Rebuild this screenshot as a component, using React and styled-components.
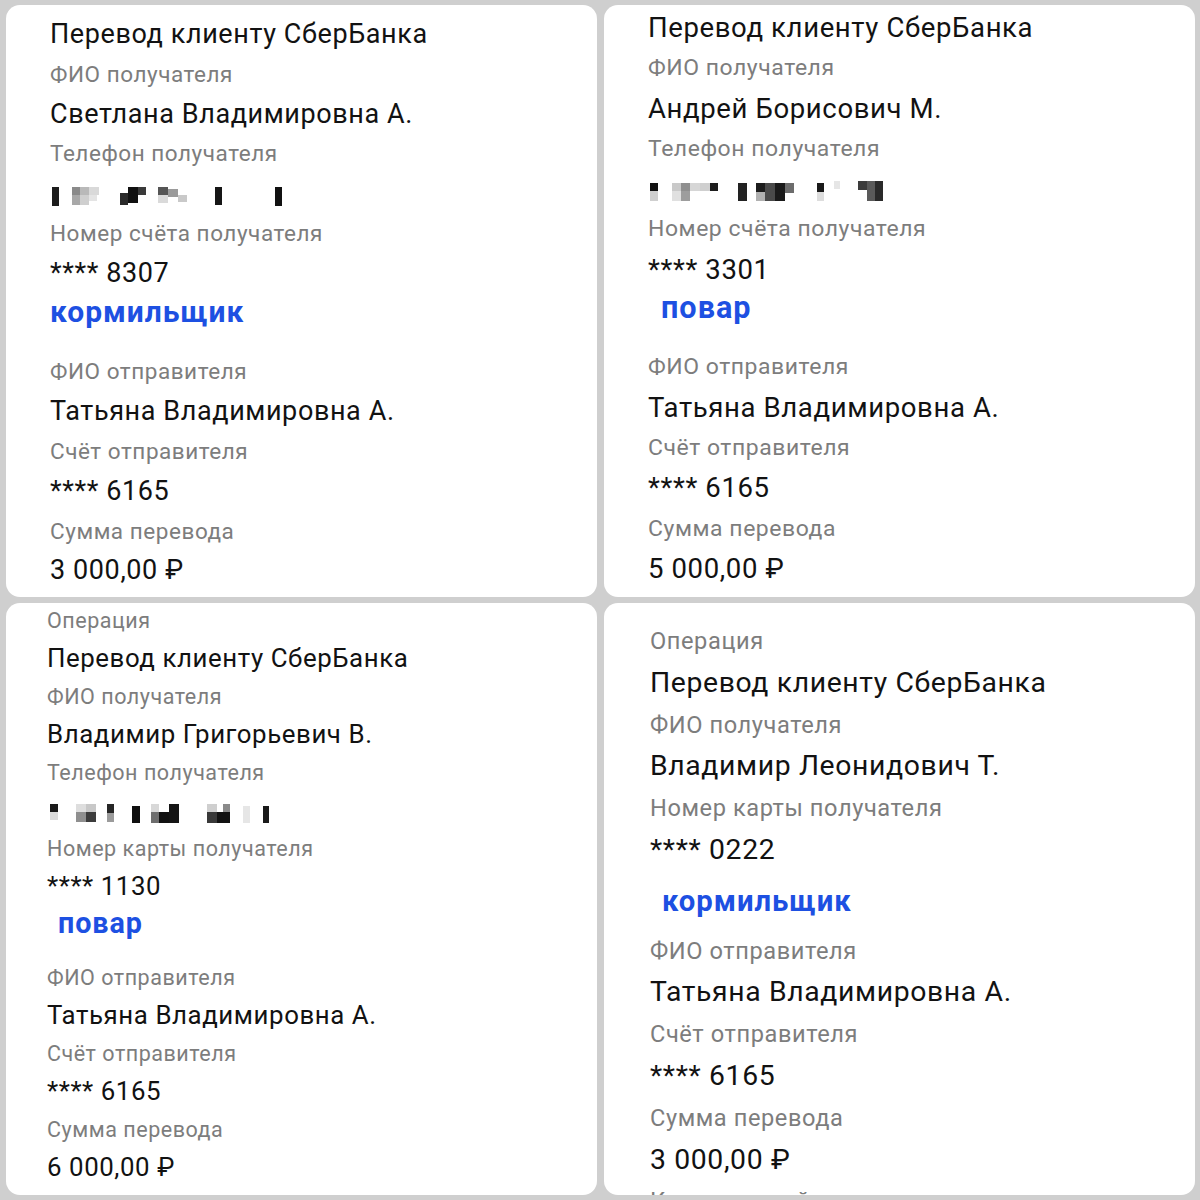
import React from 'react';
import styled, {createGlobalStyle} from 'styled-components';

const GlobalStyle = createGlobalStyle`
    html, body {
        margin: 0;
        padding: 0;
        background: #cfcfcf;
    }
    body {
        font-family: Roboto, "Liberation Sans", Arial, sans-serif;
    }
`

const Collage = styled.div`
    width: 1200px;
    height: 1200px;
    box-sizing: border-box;
    padding: 5px 5px 5px 6px;
    display: grid;
    grid-template-columns: 1fr 1fr;
    grid-template-rows: 1fr 1fr;
    column-gap: 7px;
    row-gap: 6px;
    background: #cfcfcf;
`

const Panel = styled.div`
    background: #ffffff;
    border-radius: 14px;
    overflow: hidden;
    display: flex;
    flex-direction: column;
    padding-left: ${p => p.$left}px;
    padding-top: ${p => Math.max(p.$top, 0)}px;
`

const Rows = styled.div`
    display: flex;
    flex-direction: column;
    margin-top: ${p => Math.min(p.$top, 0)}px;
`

const Label = styled.div`
    height: ${p => p.$line}px;
    line-height: ${p => p.$line + 3}px;
    font-size: ${p => 22.5 * p.$scale}px;
    letter-spacing: ${p => 0.55 * p.$scale}px;
    color: #7d7d7d;
    white-space: nowrap;
`

const Value = styled.div`
    height: ${p => p.$line}px;
    line-height: ${p => p.$line + 3}px;
    font-size: ${p => 27 * p.$scale}px;
    letter-spacing: ${p => 0.6 * p.$scale}px;
    color: #121212;
    white-space: nowrap;
`

const Tag = styled.div`
    height: ${p => p.$line}px;
    line-height: ${p => p.$line}px;
    font-size: ${p => 30 * p.$scale}px;
    font-weight: 700;
    letter-spacing: ${p => 1 * p.$scale}px;
    color: #1d50e2;
    padding-left: ${p => p.$indent}px;
    margin-top: ${p => p.$before}px;
    margin-bottom: ${p => p.$after}px;
    white-space: nowrap;
`

const MaskRow = styled.div`
    height: ${p => p.$line}px;
    display: flex;
    align-items: center;
    padding-top: 7px;
    box-sizing: border-box;
`

function Mosaic({cells, width}) {
    return (
        <svg width={width} height={24} viewBox={`0 0 ${width} 24`}>
            {cells.map(([x, y, w, h, c], i) => (
                <rect key={i} x={x} y={y} width={w} height={h} fill={c} />
            ))}
        </svg>
    );
}

const mosaicA = [
    [2, 3, 7, 19, '#1c1c1c'],
    [22, 3, 8, 8, '#8a8a8a'], [30, 3, 9, 8, '#b9b9b9'], [39, 3, 10, 8, '#d9d9d9'],
    [22, 11, 8, 10, '#a8a8a8'], [30, 11, 9, 10, '#cfcfcf'], [39, 11, 8, 6, '#e4e4e4'],
    [70, 9, 8, 12, '#2a2a2a'], [78, 3, 10, 16, '#111111'], [88, 3, 8, 8, '#3a3a3a'],
    [108, 3, 10, 8, '#555555'], [118, 5, 10, 8, '#9a9a9a'], [128, 11, 9, 7, '#c9c9c9'], [108, 11, 10, 8, '#dadada'],
    [165, 3, 7, 18, '#161616'],
    [225, 3, 7, 19, '#111111']
];

const mosaicB = [
    [2, 4, 8, 8, '#111111'], [2, 12, 8, 10, '#cfcfcf'],
    [24, 4, 9, 8, '#c9c9c9'], [33, 4, 9, 8, '#8f8f8f'], [42, 4, 10, 8, '#d6d6d6'], [24, 12, 9, 10, '#e0e0e0'], [33, 12, 9, 10, '#9d9d9d'],
    [62, 4, 8, 8, '#1d1d1d'], [52, 4, 10, 8, '#cfcfcf'],
    [90, 4, 9, 18, '#222222'],
    [108, 4, 9, 9, '#1c1c1c'], [117, 4, 10, 18, '#4a4a4a'], [127, 4, 10, 18, '#1a1a1a'], [137, 4, 9, 10, '#6c6c6c'], [108, 13, 9, 9, '#b0b0b0'],
    [169, 4, 7, 9, '#1a1a1a'], [169, 13, 7, 9, '#dddddd'],
    [186, 2, 6, 8, '#e6e6e6'],
    [210, 2, 9, 9, '#3c3c3c'], [219, 2, 8, 20, '#5a5a5a'], [227, 2, 8, 20, '#2a2a2a']
];

const mosaicC = [
    [3, 3, 8, 8, '#1a1a1a'], [3, 11, 8, 8, '#dcdcdc'],
    [29, 3, 10, 8, '#dedede'], [29, 11, 10, 10, '#8f8f8f'], [39, 3, 10, 8, '#c8c8c8'], [39, 11, 10, 10, '#3c3c3c'],
    [60, 3, 7, 9, '#262626'], [60, 12, 7, 9, '#9b9b9b'],
    [85, 5, 8, 17, '#0f0f0f'],
    [104, 3, 8, 8, '#d8d8d8'], [112, 11, 10, 11, '#121212'], [122, 3, 10, 19, '#151515'], [104, 11, 8, 11, '#6e6e6e'],
    [160, 3, 10, 8, '#cfcfcf'], [160, 11, 10, 11, '#393939'], [170, 11, 13, 11, '#121212'], [176, 3, 7, 8, '#8a8a8a'],
    [196, 5, 7, 17, '#e6e6e6'],
    [216, 5, 6, 17, '#1a1a1a']
];

const panels = [
    {
        key: 'tl', left: 44, top: 8, line: 39.8, scale: 1,
        rows: [
            ['v', 'Перевод клиенту СберБанка'],
            ['l', 'ФИО получателя'],
            ['v', 'Светлана Владимировна А.'],
            ['l', 'Телефон получателя'],
            ['m', mosaicA, 240],
            ['l', 'Номер счёта получателя'],
            ['v', '**** 8307'],
            ['t', 'кормильщик', 0, 0, 19, 1],
            ['l', 'ФИО отправителя'],
            ['v', 'Татьяна Владимировна А.'],
            ['l', 'Счёт отправителя'],
            ['v', '**** 6165'],
            ['l', 'Сумма перевода'],
            ['v', '3 000,00 ₽']
        ]
    },
    {
        key: 'tr', left: 44, top: 1, line: 40.3, scale: 1.02,
        rows: [
            ['v', 'Перевод клиенту СберБанка'],
            ['l', 'ФИО получателя'],
            ['v', 'Андрей Борисович М.'],
            ['l', 'Телефон получателя'],
            ['m', mosaicB, 240],
            ['l', 'Номер счёта получателя'],
            ['v', '**** 3301'],
            ['t', 'повар', 13, 0, 17, 1.02],
            ['l', 'ФИО отправителя'],
            ['v', 'Татьяна Владимировна А.'],
            ['l', 'Счёт отправителя'],
            ['v', '**** 6165'],
            ['l', 'Сумма перевода'],
            ['v', '5 000,00 ₽']
        ]
    },
    {
        key: 'bl', left: 41, top: -3, line: 38, scale: 0.957,
        rows: [
            ['l', 'Операция'],
            ['v', 'Перевод клиенту СберБанка'],
            ['l', 'ФИО получателя'],
            ['v', 'Владимир Григорьевич В.'],
            ['l', 'Телефон получателя'],
            ['m', mosaicC, 230],
            ['l', 'Номер карты получателя'],
            ['v', '**** 1130'],
            ['t', 'повар', 11, 0, 15, 0.957],
            ['l', 'ФИО отправителя'],
            ['v', 'Татьяна Владимировна А.'],
            ['l', 'Счёт отправителя'],
            ['v', '**** 6165'],
            ['l', 'Сумма перевода'],
            ['v', '6 000,00 ₽']
        ]
    },
    {
        key: 'br', left: 46, top: 16, line: 41.8, scale: 1.05,
        rows: [
            ['l', 'Операция'],
            ['v', 'Перевод клиенту СберБанка'],
            ['l', 'ФИО получателя'],
            ['v', 'Владимир Леонидович Т.'],
            ['l', 'Номер карты получателя'],
            ['v', '**** 0222'],
            ['t', 'кормильщик', 12, 11, 6, 0.975],
            ['l', 'ФИО отправителя'],
            ['v', 'Татьяна Владимировна А.'],
            ['l', 'Счёт отправителя'],
            ['v', '**** 6165'],
            ['l', 'Сумма перевода'],
            ['v', '3 000,00 ₽'],
            ['l', 'Комментарий']
        ]
    }
];

function Receipt({panel}) {
    const {left, top, line, scale, rows} = panel;
    return (
        <Panel $left={left} $top={top}>
            <Rows $top={top}>
                {rows.map((row, i) => {
                    const [type, text] = row;
                    if (type === 'l') {
                        return <Label key={i} $line={line} $scale={scale}>{text}</Label>;
                    }
                    if (type === 'v') {
                        return <Value key={i} $line={line} $scale={scale}>{text}</Value>;
                    }
                    if (type === 'm') {
                        return (
                            <MaskRow key={i} $line={line}>
                                <Mosaic cells={text} width={row[2]} />
                            </MaskRow>
                        );
                    }
                    return (
                        <Tag key={i} $line={line} $scale={row[5]} $indent={row[2]} $before={row[3]} $after={row[4]}>
                            {text}
                        </Tag>
                    );
                })}
            </Rows>
        </Panel>
    );
}

function App() {
    return (
        <>
            <GlobalStyle />
            <Collage>
                {panels.map(panel => (
                    <Receipt key={panel.key} panel={panel} />
                ))}
            </Collage>
        </>
    );
}

export default App;
